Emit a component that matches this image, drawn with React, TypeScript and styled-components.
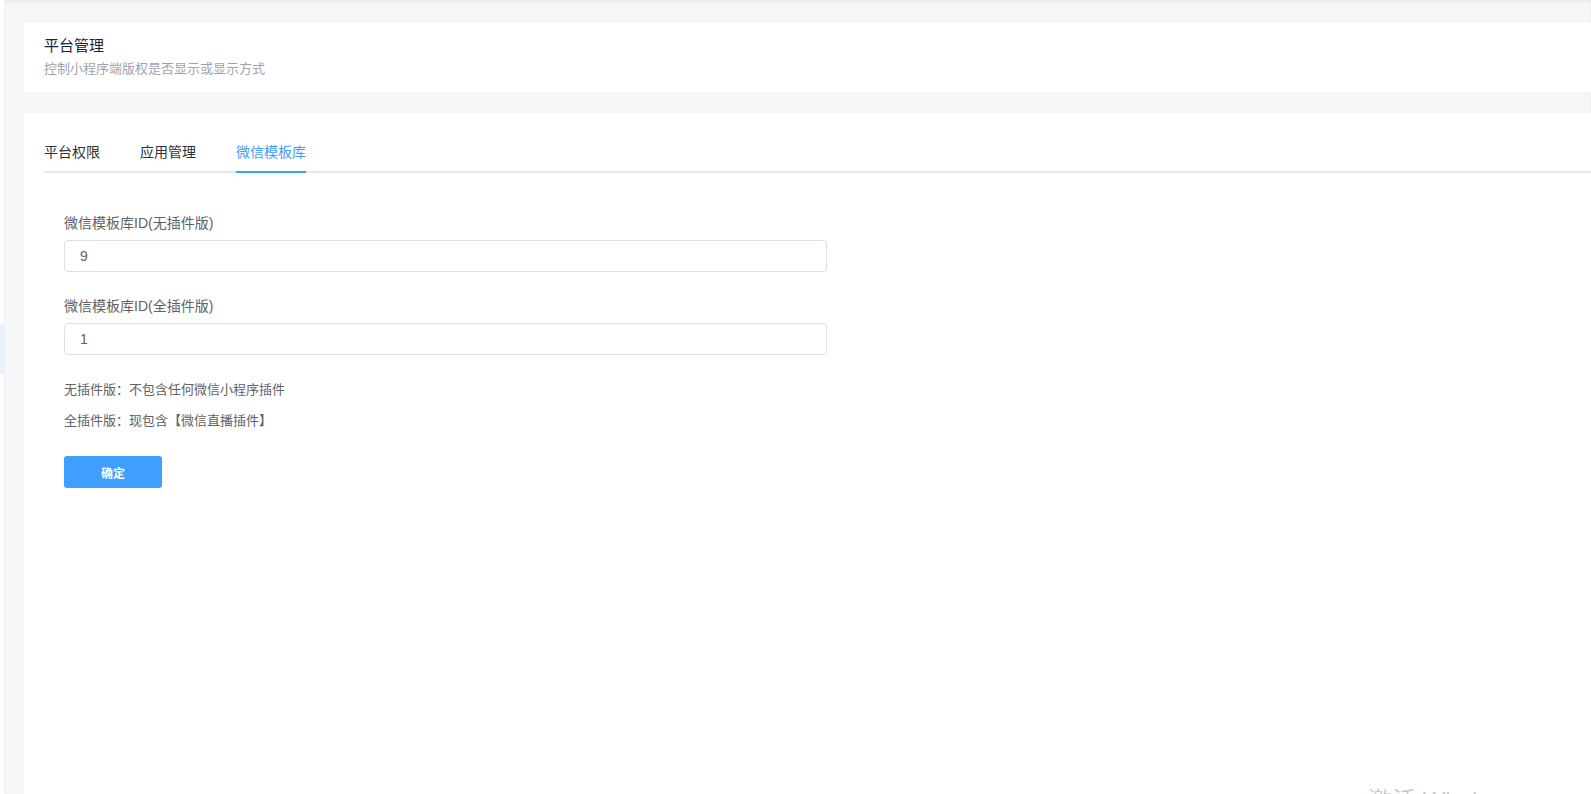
import styled, { createGlobalStyle } from "styled-components";

const tabs = ["平台权限", "应用管理", "微信模板库"];

const fields = [
  { label: "微信模板库ID(无插件版)", value: "9" },
  { label: "微信模板库ID(全插件版)", value: "1" },
];

export default function App() {
  return (
    <>
      <GlobalStyle />
      <Page>
        <Rail>
          <RailActive />
        </Rail>
        <Main>
          <HeaderCard>
            <Title>平台管理</Title>
            <SubTitle>控制小程序端版权是否显示或显示方式</SubTitle>
          </HeaderCard>
          <ContentCard>
            <TabBar>
              {tabs.map((t, i) => (
                <TabItem key={t} $active={i === 2}>
                  {t}
                </TabItem>
              ))}
            </TabBar>
            <Form>
              {fields.map((f) => (
                <Field key={f.label}>
                  <Label>{f.label}</Label>
                  <Input defaultValue={f.value} />
                </Field>
              ))}
              <Notes>
                <Note>无插件版：不包含任何微信小程序插件</Note>
                <Note>全插件版：现包含【微信直播插件】</Note>
              </Notes>
              <SubmitButton type="button">确定</SubmitButton>
            </Form>
          </ContentCard>
        </Main>
        <Watermark>激活 Windows</Watermark>
      </Page>
    </>
  );
}

// 스타일

const GlobalStyle = createGlobalStyle`
  body {
    margin: 0;
    background: #f5f7f9;
    font-family: "Liberation Sans", "Noto Sans CJK SC", sans-serif;
    overflow: hidden;
  }
`;

const Page = styled.div`
  position: relative;
  display: flex;
  height: 100vh;
  overflow: hidden;
`;

const Rail = styled.div`
  width: 4px;
  flex-shrink: 0;
  background: #ffffff;
  padding-top: 324px;
`;

const RailActive = styled.div`
  height: 50px;
  background: #e8f3ff;
`;

const Main = styled.div`
  flex: 1;
  display: flex;
  flex-direction: column;
  gap: 21px;
  padding: 23px 0 0 20px;
  background: #f5f7f9;
  box-shadow: inset 0 2px 3px rgba(0, 0, 0, 0.06);
`;

const HeaderCard = styled.div`
  background: #ffffff;
  height: 69px;
  box-sizing: border-box;
  padding: 12px 20px 0;
`;

const Title = styled.div`
  font-size: 15px;
  line-height: 22px;
  color: #17233d;
`;

const SubTitle = styled.div`
  font-size: 13px;
  line-height: 24px;
  color: #9ea3ab;
`;

const ContentCard = styled.div`
  flex: 1;
  background: #ffffff;
  padding: 21px 0 0 20px;
`;

const TabBar = styled.div`
  display: flex;
  border-bottom: 2px solid #e4e7ed;
`;

const TabItem = styled.div<{ $active?: boolean }>`
  height: 37px;
  line-height: 37px;
  padding: 0 20px;
  margin-bottom: -2px;
  font-size: 14px;
  color: ${(p) => (p.$active ? "#409eff" : "#303133")};
  border-bottom: 2px solid ${(p) => (p.$active ? "#409eff" : "transparent")};
  cursor: pointer;

  &:first-child {
    padding-left: 0;
  }
  &:last-child {
    padding-right: 0;
  }
  ${(p) =>
    p.$active &&
    `
    margin-left: 20px;
    padding-left: 0;
  `}
`;

const Form = styled.div`
  display: flex;
  flex-direction: column;
  align-items: flex-start;
  padding: 39px 20px 0;
`;

const Field = styled.div`
  display: flex;
  flex-direction: column;
  gap: 6px;

  & + & {
    margin-top: 23px;
  }
`;

const Label = styled.label`
  font-size: 14px;
  line-height: 22px;
  color: #606266;
`;

const Input = styled.input`
  width: 763px;
  height: 32px;
  box-sizing: border-box;
  padding: 0 15px;
  border: 1px solid #dcdfe6;
  border-radius: 4px;
  font-family: inherit;
  font-size: 14px;
  color: #606266;
  outline: none;
`;

const Notes = styled.div`
  margin-top: 19px;
`;

const Note = styled.div`
  font-size: 13px;
  line-height: 31px;
  color: #606266;
`;

const SubmitButton = styled.button`
  margin-top: 20px;
  width: 98px;
  height: 32px;
  border: none;
  border-radius: 3px;
  background: #409eff;
  color: #ffffff;
  font-family: inherit;
  font-size: 12px;
  font-weight: 600;
  cursor: pointer;
`;

const Watermark = styled.div`
  position: absolute;
  left: 1368px;
  top: 781px;
  font-size: 24px;
  color: rgba(0, 0, 0, 0.22);
  pointer-events: none;
  white-space: nowrap;
`;
